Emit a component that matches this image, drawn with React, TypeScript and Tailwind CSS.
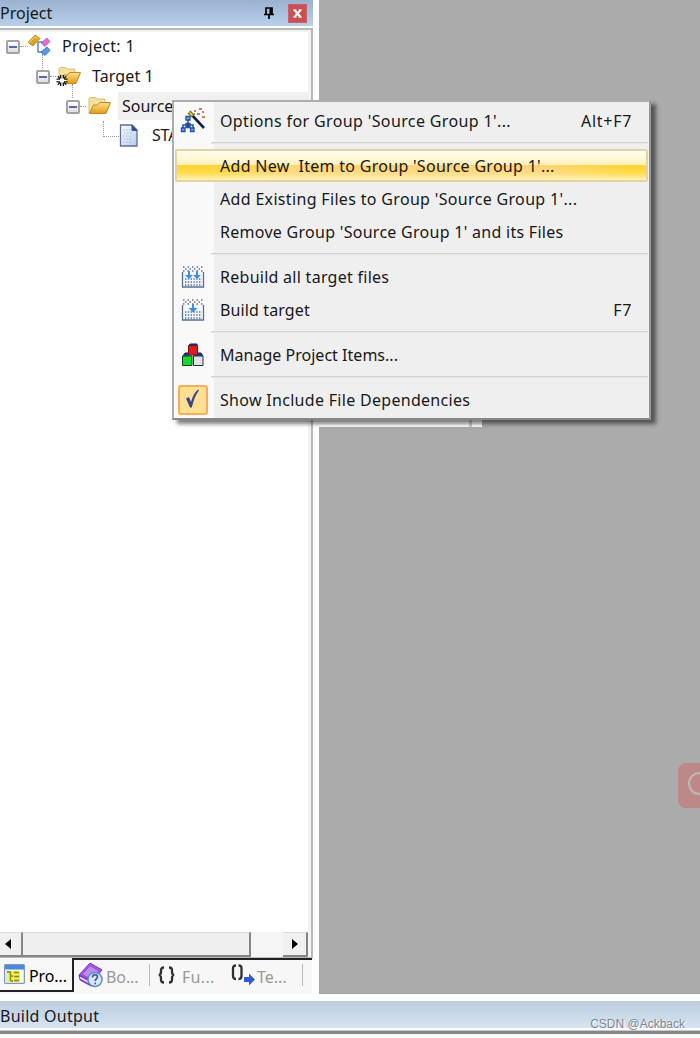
import { ReactNode } from 'react';
import clsx from 'clsx';

const ProjectIcon = () => (
    <svg width="24" height="24" viewBox="0 0 24 24">
        <path d="M10 8v10h5M10 8h5" fill="none" stroke="#5d86b8" strokeWidth="1.5" />
        <path d="M0 8.5 7 1l5 3.5L5 12z" fill="#d9a528" stroke="#b98212" strokeWidth=".8" />
        <path d="M1.5 8.5 7 2.5l3 2" fill="none" stroke="#f4d77a" />
        <path d="m13 9 6-5 3 3.500-5 5z" fill="#dc71d8" stroke="#c050c0" strokeWidth=".8" />
        <path d="m13 18 6-5 3 3.500-5 5z" fill="#5a9ae6" stroke="#2d66b4" strokeWidth=".8" />
    </svg>
);

const FolderIcon = ({ target }: { target?: boolean }) => (
    <svg width="26" height="20" viewBox="0 0 26 20" className="overflow-visible">
        <defs>
            <linearGradient id="folder" x1="0" y1="0" x2="0" y2="1">
                <stop offset="0" stopColor="#ffe08c" />
                <stop offset="1" stopColor="#e39b12" />
            </linearGradient>
        </defs>
        <path d="M3 17V3l1-1.500h6L11.500 3H19v5l-12 3z" fill="#f5e19b" stroke="#d5bf7d" />
        <path d="m3.500 17.500 4-8.500h4l2-2.500h11L20 17.500z" fill="url(#folder)" stroke="#c08a20" />
        {target && (
            <g>
                <circle cx="6" cy="14.500" r="4.500" fill="#fff" />
                <path
                    d="M4.700 9v3.500M7.300 9v3.500M4.700 16.500V20M7.300 16.500V20M.5 13.200H4M.5 15.800H4M8 13.200h3.500M8 15.800h3.500M1.800 10.300l2 2M10.200 10.300l-2 2M1.800 18.700l2-2M10.200 18.700l-2-2"
                    stroke="#111"
                    strokeWidth="1.300"
                />
            </g>
        )}
    </svg>
);

const FileIcon = () => (
    <svg width="20" height="23" viewBox="0 0 20 23">
        <defs>
            <linearGradient id="file" x1="0" y1="0" x2="1" y2="1">
                <stop offset="0" stopColor="#fff" />
                <stop offset="1" stopColor="#b3cbf0" />
            </linearGradient>
        </defs>
        <path d="M1.500 1h11.500l5 5v16H1.500z" fill="url(#file)" stroke="#5c7195" strokeWidth="1.300" />
        <path d="M13 1v5.500h5z" fill="#375481" stroke="#375481" />
        <path d="M4 6h8M5 9h9M4 12h9M5 15h9M4 18h9" stroke="#aab3c2" strokeDasharray="1.500 1.500" />
    </svg>
);

const WandIcon = () => (
    <svg width="26" height="26" viewBox="0 0 26 26">
        <path d="M8 12v4M3 20v-3h10v3M8 16v4" fill="none" stroke="#2f569e" strokeWidth="1.600" />
        <g fill="#70a9f0" stroke="#2350a5" strokeWidth="1.300">
            <path d="M6 8.500h4v3.500H6zM1.500 20H5v3.500H1.500zM10.500 20H14v3.500h-3.500z" />
            <path d="M6 15.500h4v4H6z" fill="#244c91" />
        </g>
        <path d="m10 5 14 15" stroke="#17223c" strokeWidth="2.600" />
        <path d="m9 4 4 4" stroke="#776d10" strokeWidth="4" />
        <path d="m9.500 4.500 3 3" stroke="#eee34b" strokeWidth="1.500" />
        <path d="M14 3h2M19 1h3M17 6h3M22 4h2M22 9h3M14 6h1" stroke="#b45050" strokeWidth="1.600" />
    </svg>
);

const BuildIcon = ({ all }: { all?: boolean }) => (
    <svg width="24" height="24" viewBox="0 0 24 24">
        <path d="M2 2h21M2 6h21" stroke="#66738a" strokeWidth="1.300" strokeDasharray="1.500 3" />
        <path d="M4 4h18" stroke="#66738a" strokeWidth="1.300" strokeDasharray="1.500 3" />
        <path d="M1.500 7v15h21V7" fill="#f4f8ff" stroke="#596f92" strokeWidth="1.300" />
        <path d="M4 14h17M4 17h17M4 20h17" stroke="#596f92" strokeWidth="1.300" strokeDasharray="1.400 1.400" />
        {all ? (
            <path d="M7 6h2v4h3l-4 4-4-4h3zM15 6h2v4h3l-4 4-4-4h3z" fill="#438af0" />
        ) : (
            <path d="M11 6h2v4h3.500L12 14.500 7.500 10H11z" fill="#438af0" />
        )}
    </svg>
);

const BlocksIcon = () => (
    <svg width="24" height="24" viewBox="0 0 24 24">
        <path d="m8 3 1-2h7v3M2 13l2-3h4v3M13 13l1-3h6l2 3" fill="#173c9b" stroke="#111d60" />
        <path d="M7.500 2.500h9V12h-9z" fill="#e41919" stroke="#6d1515" />
        <path d="M1.500 13h9.500v9.500H1.500z" fill="#12dc2b" stroke="#17461e" />
        <path d="M12.500 13H22v9.500h-9.500z" fill="#dfe2e7" stroke="#29303f" />
    </svg>
);

const CheckIcon = () => (
    <div className="flex h-[30px] w-[30px] shrink-0 justify-center rounded-[3px] border-2 border-[#f7ac59] bg-[#ffe092] pt-[2px]">
        <svg width="16" height="20" viewBox="0 0 16 20">
            <path d="M1 9.500 4 8l2 5C7.500 7.500 9.500 3.500 13 .5l1 .700C10.500 6 8.500 11.500 6.800 18.500H5z" fill="#3b4384" />
        </svg>
    </div>
);

const PinIcon = () => (
    <svg width="12" height="14" viewBox="0 0 12 14">
        <path d="M3 8V2h6v6M1 8.500h10M6 9v4" fill="none" stroke="#000" strokeWidth="1.700" />
        <path d="M7.500 2v6" stroke="#000" strokeWidth="2" />
    </svg>
);

const ProjectTabIcon = () => (
    <svg width="21" height="20" viewBox="0 0 21 20">
        <path d="M.7.700h19.600v18.600H.700z" fill="#f6fae0" stroke="#6681ab" />
        <path d="M1 1h19v4.500H1z" fill="#4c88dd" />
        <path d="M1 5.500h3V19H1z" fill="#d9e5f5" />
        <path d="M4 7h12v11H4z" fill="#f2ee4c" />
        <path d="M3 8h3.500v9M6.500 12H9M6.500 17H9M10 8.500h5M10 12.500h5M10 16.500h5" fill="none" stroke="#87872b" strokeWidth="1.300" />
    </svg>
);

const BookIcon = () => (
    <svg width="26" height="26" viewBox="0 0 26 26">
        <path d="M1 13 12 1l12 7-10 12z" fill="#a05ce0" stroke="#7b2fc4" />
        <path d="M4 12.500 12 3.500l9 5.500-8 8z" fill="#b98cec" stroke="#8f46da" />
        <path d="m1 13 1 5 11 6v-5z" fill="#8a4acb" stroke="#7434b0" />
        <path d="m2 15.500 11 6" stroke="#eadcf8" strokeWidth="1.500" />
        <circle cx="17" cy="17.500" r="7" fill="#d9e7fc" stroke="#6186d2" strokeWidth="1.500" />
        <path d="M14.500 15.500c0-4 5-3.500 5-.5 0 2-2.300 1.700-2.300 4M17.200 20.500v1.800" fill="none" stroke="#32508f" strokeWidth="1.500" />
    </svg>
);

const BracesIcon = () => (
    <svg width="18" height="18" viewBox="0 0 18 18">
        <path
            d="M6 1.500Q3 1.500 3 4v2q0 2.500-2 3 2 .5 2 3v2q0 2.500 3 2.500M11 1.500q3 0 3 2.500v2q0 2.500 2 3-2 .5-2 3v2q0 2.500-3 2.500"
            fill="none"
            stroke="#303030"
            strokeWidth="2.300"
        />
    </svg>
);

const TemplateIcon = () => (
    <svg width="24" height="22" viewBox="0 0 24 22">
        <path d="M5 1.500Q2 1.500 2 4v8q0 3 3 3M7.500 1.500q3 0 3 2.500v8q0 3-3 3" fill="none" stroke="#303030" strokeWidth="2.300" />
        <path d="M13 13h5V9.500l6 6-6 6V18h-5z" fill="#2e5cd0" />
    </svg>
);

const Expander = ({ nested }: { nested?: boolean }) => (
    <div className="relative mt-[2px] flex h-[14px] w-[14px] shrink-0 items-center justify-center rounded-[2px] border-2 border-[#a2a2a2] bg-gradient-to-b from-white to-[#dedede]">
        <div className="h-[2px] w-2 bg-[#5468ae]" />
        {nested && <div className="absolute -top-[18px] left-1 h-[14px] border-l border-dotted border-[#999]" />}
    </div>
);

interface MenuItemProps {
    label: string;
    spacing: string;
    icon?: ReactNode;
    shortcut?: string;
    active?: boolean;
}

const MenuItem = ({ label, spacing, icon, shortcut, active }: MenuItemProps) => (
    <div
        className={clsx(
            'flex h-[33px] items-center rounded-[2px]',
            active &&
                'border-2 border-[#e3d3a0] bg-[linear-gradient(#fffdf0_0%,#fff0bd_48%,#fff0bd00_50%,#fff0ad40_75%,#fff3b8_100%),linear-gradient(90deg,#ffd42e_0%,#ffd42e_8%,#ffd477_25%,#ffd477_78%,#ffd42e_96%)]'
        )}
    >
        <div className={clsx('flex h-full shrink-0 items-center justify-center', active ? 'w-[43px]' : 'mr-[9px] w-[36px]')}>{icon}</div>
        <span className={clsx('grow whitespace-pre', spacing)}>{label}</span>
        {shortcut && <span className="pr-[16px] tracking-[0.7px]">{shortcut}</span>}
    </div>
);

const Separator = () => (
    <div className="flex h-3 items-center pl-9">
        <div className="h-[2px] grow border-t border-[#d3d3d3] bg-[#e6e6e6]" />
    </div>
);

const ContextMenu = () => (
    <div className="absolute left-[172px] top-[100px] h-[320px] w-[479px] border-2 border-[#aaadb3] border-b-[#85878a] border-r-[#96989a] bg-[linear-gradient(90deg,#f9f9f9_40px,#efefef_40px)] px-px pt-[2px] shadow-[5px_4px_4px_#00000080]">
        <MenuItem label="Options for Group 'Source Group 1'..." spacing="tracking-[0.37px]" icon={<WandIcon />} shortcut="Alt+F7" />
        <Separator />
        <MenuItem label="Add New  Item to Group 'Source Group 1'..." spacing="tracking-[0.29px]" active />
        <MenuItem label="Add Existing Files to Group 'Source Group 1'..." spacing="tracking-[0.33px]" />
        <MenuItem label="Remove Group 'Source Group 1' and its Files" spacing="tracking-[0.28px]" />
        <Separator />
        <MenuItem label="Rebuild all target files" spacing="tracking-[0.27px]" icon={<BuildIcon all />} />
        <MenuItem label="Build target" spacing="tracking-[0.12px]" icon={<BuildIcon />} shortcut="F7" />
        <Separator />
        <MenuItem label="Manage Project Items..." spacing="tracking-[0.02px]" icon={<BlocksIcon />} />
        <Separator />
        <MenuItem label="Show Include File Dependencies" spacing="tracking-[0.3px]" icon={<CheckIcon />} />
    </div>
);

const ProjectTree = () => (
    <div className="-mt-px flex flex-col">
        <div className="flex h-[30px] items-center pl-[6px]">
            <Expander />
            <div className="w-2 border-t border-dotted border-[#999]" />
            <ProjectIcon />
            <span className="pl-[10px] tracking-[0.3px]">Project: 1</span>
        </div>
        <div className="flex h-[30px] items-center pl-9">
            <Expander nested />
            <div className="w-[6px] border-t border-dotted border-[#999]" />
            <FolderIcon target />
            <span className="pl-[10px] tracking-[0.1px]">Target 1</span>
        </div>
        <div className="flex h-[30px] items-center pl-[66px]">
            <Expander nested />
            <div className="w-[6px] border-t border-dotted border-[#999]" />
            <FolderIcon />
            <span className="ml-[6px] h-7 grow bg-[#f0f0f0] pl-1 leading-7">Source Group 1</span>
        </div>
        <div className="flex h-[28px] items-center pl-[103px]">
            <div className="mb-[12px] h-4 w-4 border-b border-l border-dotted border-[#999]" />
            <FileIcon />
            <span className="pl-[13px] tracking-[-0.2px]">STARTUP</span>
        </div>
    </div>
);

const ScrollBar = () => (
    <div className="flex h-[26px] border-b border-[#b9b9b9] bg-[#f5f5f5]">
        <div className="flex w-[23px] items-center justify-start border-b-2 border-r-2 border-t border-[#858585] border-t-[#ddd] bg-[#f0f0f0] pl-1">
            <svg width="8" height="12" viewBox="0 0 8 12"><path d="M7 1v10L1 6z" /></svg>
        </div>
        <div className="w-[228px] border-b-2 border-r-2 border-t border-[#858585] border-t-[#ddd] bg-[#efefef]" />
        <div className="w-8" />
        <div className="flex w-[25px] items-center justify-center border-b-2 border-r-2 border-t border-[#858585] border-t-[#ddd] bg-[#f0f0f0]">
            <svg width="8" height="12" viewBox="0 0 8 12"><path d="M1 1v10l6-5z" /></svg>
        </div>
    </div>
);

const Tabs = () => (
    <div className="flex h-[36px] w-[312px] bg-[#f7f7f7] text-[#989898]">
        <div className="flex h-[34px] w-[74px] items-center border-b-2 border-r-2 border-[#222] bg-[#f8f8f8] pl-1 text-black">
            <ProjectTabIcon />
            <span className="pl-[4px] pt-[4px] tracking-[-0.1px]">Pro...</span>
        </div>
        <div className="flex grow items-center border-t-2 border-[#222] pb-1">
            <div className="flex w-[75px] items-center pl-1">
                <BookIcon />
                <span className="pl-[2px] pt-1 tracking-[-0.1px]">Bo...</span>
            </div>
            <div className="h-[22px] w-px bg-[#bbb]" />
            <div className="flex w-[81px] items-center pl-2">
                <BracesIcon />
                <span className="pl-[6px] pt-1 tracking-[0.3px]">Fu...</span>
            </div>
            <div className="flex w-[71px] items-center">
                <TemplateIcon />
                <span className="pl-[2px] pt-1">Te...</span>
            </div>
            <div className="h-[22px] w-px bg-[#bbb]" />
        </div>
    </div>
);

const ProjectPanel = () => (
    <div className="flex w-[319px] shrink-0 flex-col bg-white">
        <div className="flex h-[26px] w-[313px] items-center bg-gradient-to-b from-[#9ab2d0] to-[#b8d0ec]">
            <span className="grow">Project</span>
            <PinIcon />
            <div className="ml-[13px] mr-[6px] flex h-[19px] w-[19px] items-center justify-center border border-[#ca6262] bg-[#c94f53]">
                <svg width="9" height="9" viewBox="0 0 9 9">
                    <path d="M1.500 1 7.500 8M7.500 1l-6 7" stroke="#fff" strokeWidth="2" />
                    <path d="M0 1h3.500M5.500 1H9M0 8h3.500M5.500 8H9" stroke="#fff" strokeWidth="1.200" />
                </svg>
            </div>
        </div>
        <div className="mt-[2px] flex w-[313px] grow flex-col border-r-2 border-t-2 border-[#b9b9b9]">
            <div className="grow border-r-[3px] border-t-2 border-[#f3f3f3]">
                <ProjectTree />
            </div>
            <ScrollBar />
        </div>
        <Tabs />
    </div>
);

export default function App() {
    return (
        <div className="relative flex h-[1038px] w-[700px] flex-col overflow-hidden bg-white font-['Noto_Sans',sans-serif] text-[16px] leading-6 text-[#181818]">
            <div className="flex h-[994px]">
                <ProjectPanel />
                <div className="grow border-b border-[#a2a2a2] bg-[#ababab]" />
            </div>
            <div className="mt-[7px] flex h-[27px] items-center bg-gradient-to-b from-[#bccddd] to-[#d6e3f2]">
                <span className="grow pt-[2px] tracking-[0.25px]">Build Output</span>
                <span className="pr-[15px] pt-[19px] font-['Liberation_Sans',sans-serif] text-[12px] leading-4 text-[#7d8790] [text-shadow:1px_1px_#fff]">
                    CSDN @Ackback
                </span>
            </div>
            <div className="mt-[2px] h-[4px] border-b-[3px] border-t border-[#858585] border-t-[#c8c8c8]" />

            {/* slice of the window edge visible below the menu */}
            <div className="absolute left-[313px] top-[418px] flex h-[9px] w-[169px] bg-white">
                <div className="ml-[156px] w-[3px] bg-[#ccc]" />
            </div>
            <ContextMenu />

            <div className="absolute left-[678px] top-[763px] h-[45px] w-[44px] rounded-[8px] bg-[#bd8888]">
                <div className="ml-[10px] mt-[9px] h-[23px] w-[23px] rounded-full border-2 border-[#c1b5b5]" />
            </div>
        </div>
    );
}
